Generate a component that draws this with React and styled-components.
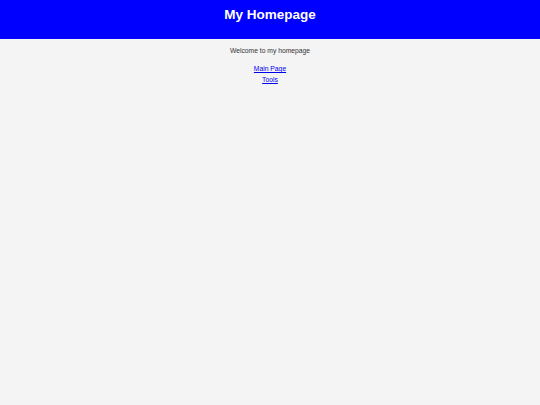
import React from "react";
import styled, { createGlobalStyle } from "styled-components";

const Global = createGlobalStyle`
  html, body { margin: 0; padding: 0; background: #f4f4f4; }
  body { font-family: "Liberation Sans", Arial, sans-serif; }
`;

const Page = styled.div`
  min-height: 405px;
  background: #f4f4f4;
  color: #333;
  font-size: 6.75px;
`;

const Header = styled.header`
  background: #0000ff;
  color: #fff;
  height: 39px;
  display: flex;
  justify-content: center;
  padding-top: 6px;
  box-sizing: border-box;
`;

const Title = styled.h1`
  margin: 0;
  font-size: 13.5px;
  line-height: 18px;
  font-weight: bold;
`;

const Main = styled.main`
  display: flex;
  flex-direction: column;
  align-items: center;
  padding-top: 7px;
`;

const Welcome = styled.p`
  margin: 0 0 9px;
  line-height: 9px;
`;

const Nav = styled.nav`
  display: flex;
  flex-direction: column;
  align-items: center;
  gap: 2px;
`;

const Link = styled.a`
  color: #0000ee;
  text-decoration: underline;
  line-height: 9px;
`;

export default function App() {
  return (
    <Page>
      <Global />
      <Header>
        <Title>My Homepage</Title>
      </Header>
      <Main>
        <Welcome>Welcome to my homepage</Welcome>
        <Nav>
          <Link href="#">Main Page</Link>
          <Link href="#">Tools</Link>
        </Nav>
      </Main>
    </Page>
  );
}
